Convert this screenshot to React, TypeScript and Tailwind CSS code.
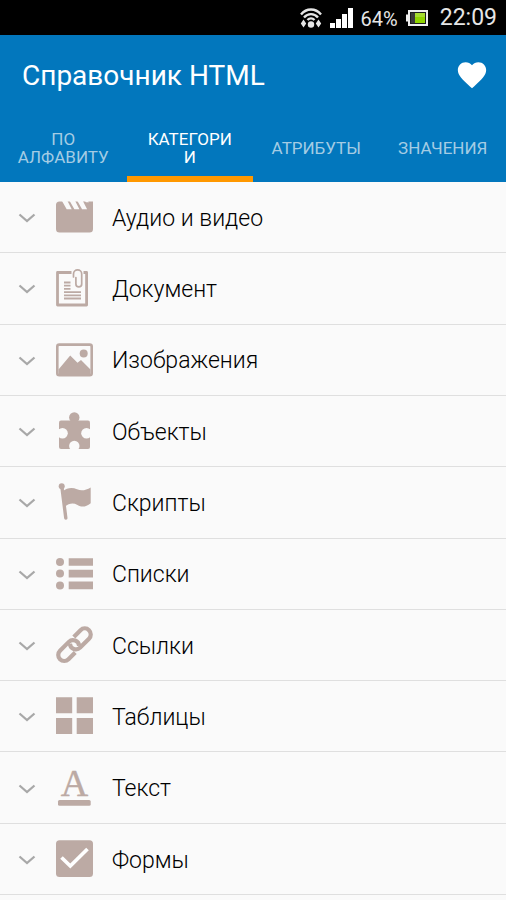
import { useState, type ReactNode } from "react"
import { MdFavorite } from "react-icons/md"

function Icon({ children }: { children: ReactNode }) {
  return (
    <svg viewBox="0 0 40 40" className="w-10 h-10 shrink-0 overflow-visible text-[#bcaaa4]" fill="currentColor" aria-hidden="true">
      {children}
    </svg>
  )
}

const categories: { name: string; icon: ReactNode }[] = [
  {
    name: "Аудио и видео",
    icon: (
      <>
        <path d="M5.500 4.500H39V32a3.500 3.500 0 0 1-3.500 3.500H5.500A3.500 3.500 0 0 1 2 32V8a3.500 3.500 0 0 1 3.500-3.500z" />
        <path
          fill="#fafafa"
          d="M8 4h5.500l4.200 8.300h-5zM15.700 4h5.500l4.200 8.300h-5zM23.400 4h5.500l4.200 8.300h-5zM31 4h3l1 1.200h-3z"
        />
      </>
    ),
  },
  {
    name: "Документ",
    icon: (
      <g fill="none" stroke="currentColor">
        <path strokeWidth="2.8" strokeLinejoin="round" d="M17.500 4.500H3.500V37H32.600V4.500H29.500" />
        <path strokeWidth="1.800" d="M10 14.500h6.500M10 17.700h6.500M10 20.900h6.500M10 24.100h17M10 27.300h17M10 30.500h17" />
        <path
          strokeWidth="1.700"
          strokeLinecap="round"
          d="M19.500 9V6a4.100 4.100 0 0 1 8.200 0V16a2.900 2.900 0 0 1-5.800 0V9.500"
        />
      </g>
    ),
  },
  {
    name: "Изображения",
    icon: (
      <>
        <rect x="3.300" y="4.600" width="34.400" height="30.600" rx="2" fill="none" stroke="currentColor" strokeWidth="2.600" />
        <circle cx="29.700" cy="13.400" r="4" />
        <path d="M4.500 29.500L16.200 15.600L23.500 22.800L27 20L36.500 29.500V35H4.500z" />
      </>
    ),
  },
  {
    name: "Объекты",
    icon: (
      <>
        <circle cx="20.300" cy="6.500" r="5.200" />
        <path d="M17.500 8h5.600v3h-5.600z" />
        <rect x="5" y="9.600" width="31" height="28.400" rx="2" />
        <g fill="#fafafa">
          <circle cx="8.500" cy="22.300" r="5.300" />
          <circle cx="32.500" cy="22.300" r="5.300" />
          <circle cx="20.300" cy="35" r="5.200" />
          <path d="M4 18.800l3-.8v8.600l-3-.8zM37 18.800l-3-.8v8.600l3-.8z" />
        </g>
      </>
    ),
  },
  {
    name: "Скрипты",
    icon: (
      <>
        <circle cx="7.700" cy="4.200" r="3" />
        <path d="M7.900 5L11.800 36" fill="none" stroke="currentColor" strokeWidth="3.400" strokeLinecap="round" />
        <path d="M9 9C13 6 18 5 23 7.300C28 9.500 32 8 36.700 5.500V21.200C32 24.500 28.500 26 23.500 23C19 20.500 15 21.500 11 24.500z" />
      </>
    ),
  },
  {
    name: "Списки",
    icon: (
      <>
        <circle cx="6" cy="8" r="4" />
        <circle cx="6" cy="19.500" r="4" />
        <circle cx="6" cy="31.500" r="4" />
        <path d="M14.700 4.200H39v7.600H14.700zM14.700 15.800H39v7.700H14.700zM14.700 27.600H39v7.700H14.700z" />
      </>
    ),
  },
  {
    name: "Ссылки",
    icon: (
      <g transform="translate(20.5 19.700) rotate(-45)" fill="none" stroke="currentColor" strokeWidth="4.200">
        <path d="M-5 6H-14.500A6 6 0 0 1-14.500-6H-2A6 6 0 0 1 2.500 4" />
        <path d="M5-6H14.500A6 6 0 0 1 14.500 6H2A6 6 0 0 1-2.500-4" />
      </g>
    ),
  },
  {
    name: "Таблицы",
    icon: <path d="M2 1.300h16.200v16H2zM22.700 1.300H39v16H22.700zM2 22h16.200v16H2zM22.700 22H39v16H22.700z" />,
  },
  {
    name: "Текст",
    icon: (
      <>
        <text
          x="20.500"
          y="28"
          fontSize="38"
          textAnchor="middle"
          stroke="currentColor"
          strokeWidth=".4"
          className="font-['Liberation_Serif',serif]"
        >
          A
        </text>
        <rect x="4" y="32" width="32.700" height="5.800" rx="1.500" />
      </>
    ),
  },
  {
    name: "Формы",
    icon: (
      <>
        <rect x="2" y="1.300" width="37" height="36.700" rx="3.500" />
        <path d="M7.500 18.500L16.300 27L33.500 10" fill="none" stroke="#fff" strokeWidth="3.700" />
      </>
    ),
  },
]

const tabs = ["По алфавиту", "Категории", "Атрибуты", "Значения"]

function StatusBar() {
  return (
    <div className="flex h-[35px] items-center justify-end bg-black pr-[9px] text-[#e6e6e6]">
      <svg viewBox="0 0 22 22" className="mr-2 h-[22px] w-[22px]" fill="none" stroke="currentColor" aria-hidden="true">
        <path strokeWidth="2.400" d="M1 7.500C6.500 .8 15.500 .8 21 7.500M4 10.500C8 6 14 6 18 10.500M7.500 13C9.500 11 12.500 11 14.500 13" />
        <circle cx="11" cy="17.500" r="3.200" fill="currentColor" stroke="none" />
        <path d="M3.500 12.500L6.200 16.500 3.500 20.500.8 16.500zM18.500 12.500L21.200 16.500 18.500 20.500 15.800 16.500z" fill="currentColor" stroke="none" />
      </svg>
      <svg viewBox="0 0 23 20" className="mr-2 h-5 w-[23px]" fill="#fff" aria-hidden="true">
        <path d="M0 15h5v5H0zM6 11h5v9H6zM12 6h5v14h-5zM18 0h5v20h-5z" />
      </svg>
      <span className="mr-2 pt-0.5 text-xl">64%</span>
      <svg viewBox="0 0 22 16" className="mr-3 h-4 w-[22px]" aria-hidden="true">
        <path d="M0 4.500h3v7H0z" fill="#eee" />
        <rect x="3" y="1" width="18" height="14" fill="#1c1c1c" stroke="#eee" strokeWidth="2" />
        <path d="M5 3h4v10H5z" fill="#3a3a3a" />
        <path d="M9 3h10v10H9z" fill="#8fd400" />
        <path d="M9 3h10v4H9z" fill="#a6dc30" />
      </svg>
      <span className="pt-0.5 text-[23px]">22:09</span>
    </div>
  )
}

export default function App() {
  const [activeTab, setActiveTab] = useState(1)
  const [opened, setOpened] = useState<string | null>(null)

  return (
    <div className="flex min-h-screen flex-col bg-[#fafafa] font-[Roboto,sans-serif]">
      <StatusBar />

      <header className="bg-[#0277bd] text-white">
        <div className="flex h-20 items-center justify-between pl-[22px] pr-[17px]">
          <h1 className="pt-0.5 text-[28px]">Справочник HTML</h1>
          <button type="button" aria-label="Избранное">
            <MdFavorite className="h-[34px] w-[34px]" />
          </button>
        </div>
        <div role="tablist" className="grid h-[67px] grid-cols-4">
          {tabs.map((tab, i) => (
            <button
              key={tab}
              type="button"
              role="tab"
              aria-selected={i === activeTab}
              onClick={() => setActiveTab(i)}
              className={
                "border-b-6 px-4 pt-1 text-[17px] leading-[18px] uppercase wrap-anywhere " +
                (i === activeTab ? "border-[#ff9800] text-white" : "border-transparent text-[#a4cce4]")
              }
            >
              {tab}
            </button>
          ))}
        </div>
      </header>

      <ul className="grid flex-1 auto-rows-fr pb-[5px]">
        {categories.map(({ name, icon }) => (
          <li key={name} className="border-b border-[#dfdfdf]">
            <button
              type="button"
              aria-expanded={opened === name}
              onClick={() => setOpened(opened === name ? null : name)}
              className="flex h-full min-h-[70px] w-full items-center pl-[18px] text-left"
            >
              <svg viewBox="0 0 18 10" className="mt-0.5 mr-[18px] h-2.5 w-[18px] shrink-0" fill="none" stroke="#a8a8a8" strokeWidth="2.3" aria-hidden="true">
                <path d="M1.500 1.500L9 8L16.500 1.500" />
              </svg>
              <Icon>{icon}</Icon>
              <span className="ml-[18px] pt-1 text-[23px] font-light text-black">{name}</span>
            </button>
          </li>
        ))}
      </ul>
    </div>
  )
}
